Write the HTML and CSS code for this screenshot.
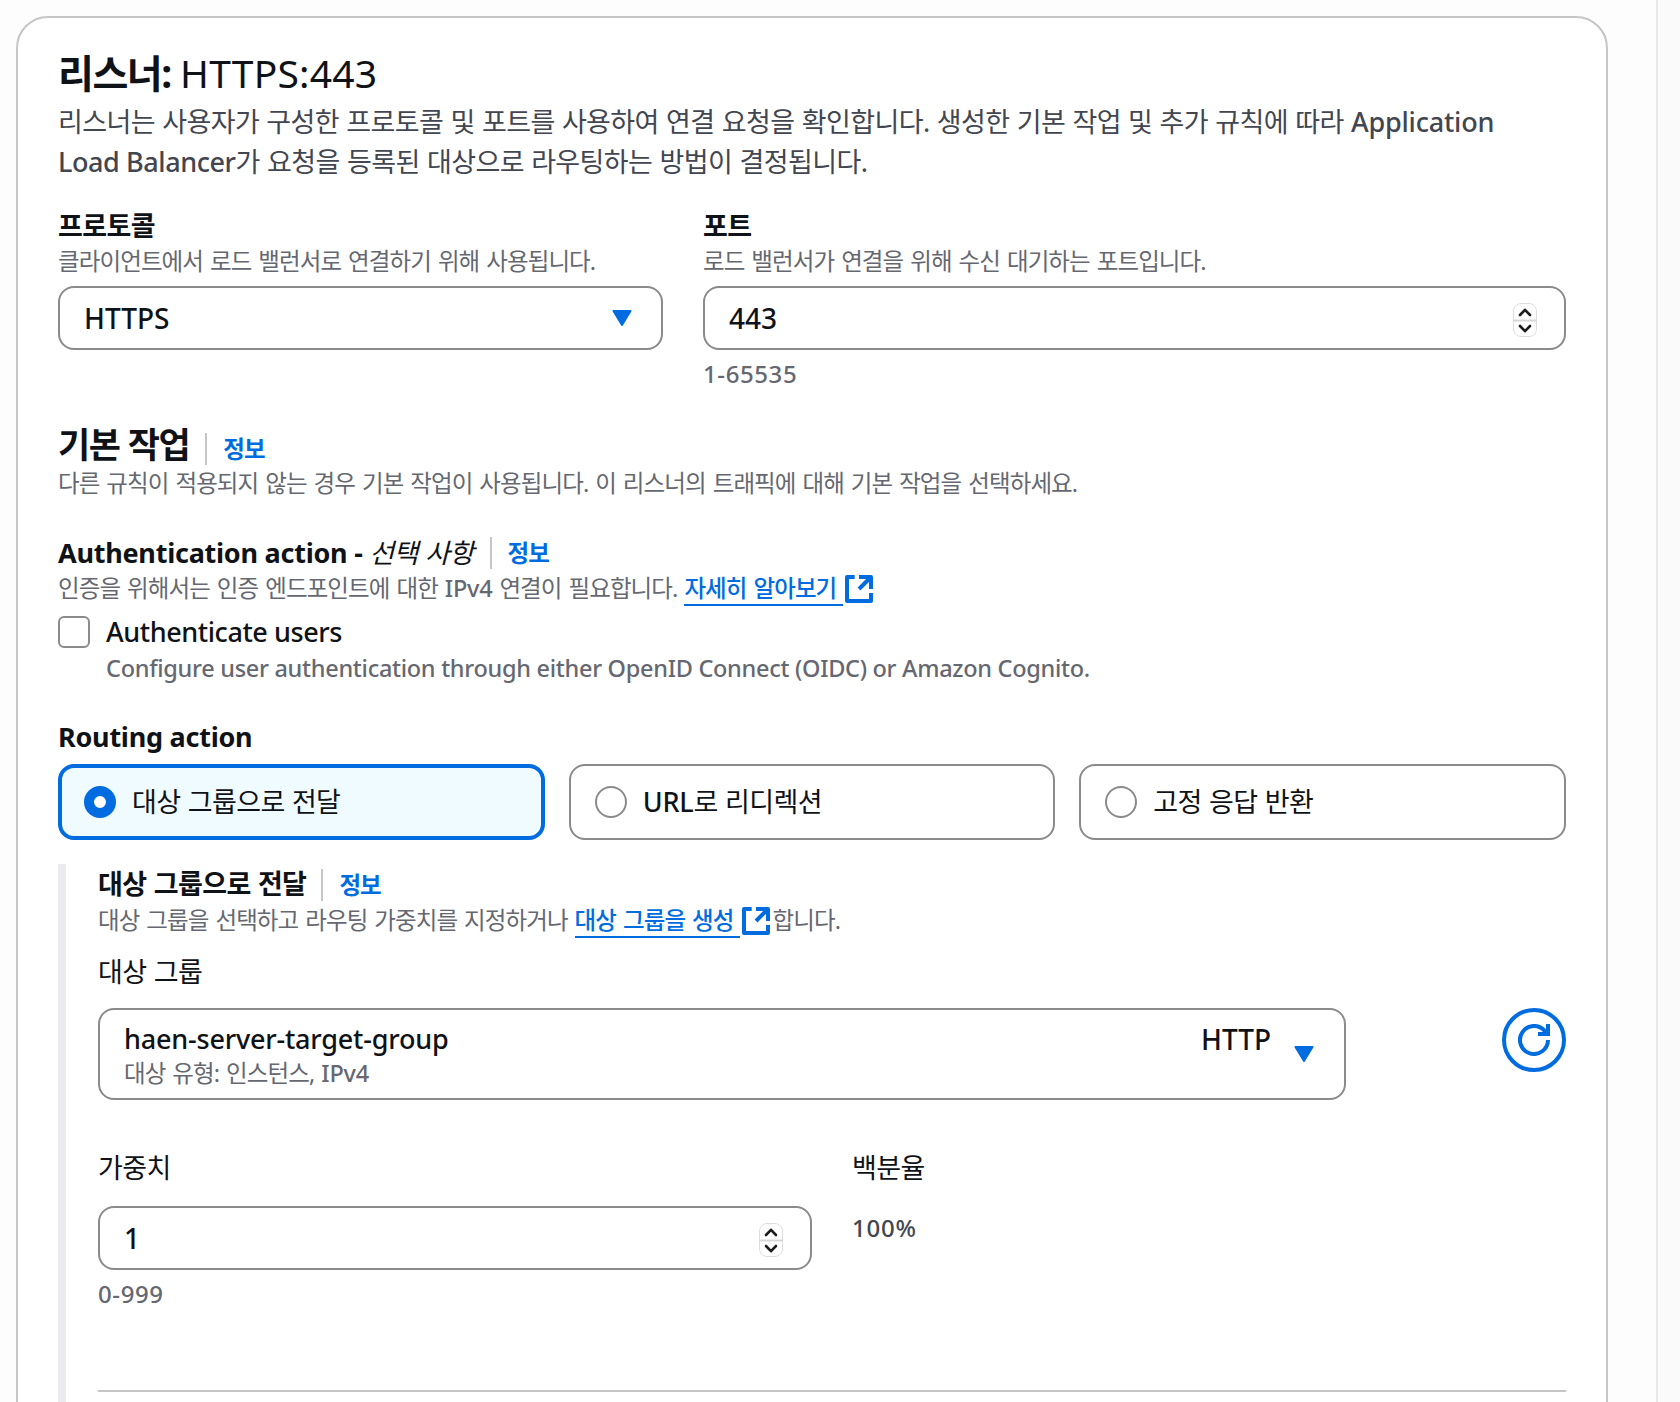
FILE: index.html
```html
<!DOCTYPE html>
<html lang="ko">
<head>
  <meta charset="UTF-8" />
  <meta name="viewport" content="width=device-width, initial-scale=1" />
  <title>리스너: HTTPS:443</title>
  <link rel="stylesheet" href="styles.css">
</head>
<body>
  <main class="page">
    <section class="card">
      <h2 class="card-title">리스너: <span class="card-title-value">HTTPS:443</span></h2>
      <p class="card-description">리스너는 사용자가 구성한 프로토콜 및 포트를 사용하여 연결 요청을 확인합니다. 생성한 기본 작업 및 추가 규칙에 따라 <span class="latin">Application</span><br><span class="latin product">Load Balancer</span>가 요청을 등록된 대상으로 라우팅하는 방법이 결정됩니다.</p>

      <div class="listener-fields">
        <div class="field">
          <div class="label">프로토콜</div>
          <div class="hint">클라이언트에서 로드 밸런서로 연결하기 위해 사용됩니다.</div>
          <div class="control" role="button" tabindex="0">
            <span class="value">HTTPS</span>
            <svg class="caret" viewBox="0 0 20 16"><path d="M1.5 1h17L10 15z" /></svg>
          </div>
        </div>
        <div class="field">
          <div class="label">포트</div>
          <div class="hint">로드 밸런서가 연결을 위해 수신 대기하는 포트입니다.</div>
          <div class="control">
            <span class="value">443</span>
            <svg class="stepper" viewBox="0 0 24 34"><rect x="0.5" y="0.5" width="23" height="33" rx="7.5" /><path class="stepper-line" d="M0 17.5h24" /><path d="M7 12l5-5.2 5 5.2M7 23l5 5.2 5-5.2" /></svg>
          </div>
          <div class="hint constraint">1-65535</div>
        </div>
      </div>

      <!-- Default action -->
      <div class="section-header default-action">
        <h3 class="section-title">기본 작업</h3>
        <a class="info">정보</a>
      </div>
      <div class="hint">다른 규칙이 적용되지 않는 경우 기본 작업이 사용됩니다. 이 리스너의 트래픽에 대해 기본 작업을 선택하세요.</div>

      <!-- Authentication -->
      <div class="section-header authentication">
        <div class="label"><span class="latin-bold">Authentication action - </span><i class="optional">선택 사항</i></div>
        <a class="info">정보</a>
      </div>
      <div class="hint">인증을 위해서는 인증 엔드포인트에 대한 <span class="latin">IPv4</span> 연결이 필요합니다. <a class="link">자세히 알아보기</a><svg class="external" viewBox="0 0 28 28"><path d="M9.7 2H2v24h24v-8M14 2h12v12M25 3L14 14" /></svg></div>
      <div class="checkbox-row">
        <span class="checkbox"></span>
        <div>
          <div class="checkbox-label">Authenticate users</div>
          <div class="hint checkbox-hint">Configure user authentication through either OpenID Connect (OIDC) or Amazon Cognito.</div>
        </div>
      </div>

      <!-- Routing action -->
      <div class="label routing-label"><span class="latin-bold">Routing action</span></div>
      <div class="tiles">
        <div class="tile selected"><span class="radio"></span>대상 그룹으로 전달</div>
        <div class="tile"><span class="radio"></span><span><span class="latin">URL</span>로 리디렉션</span></div>
        <div class="tile"><span class="radio"></span>고정 응답 반환</div>
      </div>

      <div class="forward">
        <div class="section-header">
          <div class="label">대상 그룹으로 전달</div>
          <a class="info">정보</a>
        </div>
        <div class="hint">대상 그룹을 선택하고 라우팅 가중치를 지정하거나 <a class="link">대상 그룹을 생성</a><svg class="external" viewBox="0 0 28 28"><path d="M9.7 2H2v24h24v-8M14 2h12v12M25 3L14 14" /></svg>합니다.</div>

        <div class="field-name group-name">대상 그룹</div>
        <div class="group-row">
          <div class="control group-select">
            <div class="group-text">
              <div class="group-value latin">haen-server-target-group</div>
              <div class="hint">대상 유형: 인스턴스, <span class="latin">IPv4</span></div>
            </div>
            <span class="group-protocol value">HTTP</span>
            <svg class="caret" viewBox="0 0 20 16"><path d="M1.5 1h17L10 15z" /></svg>
          </div>
          <button class="refresh" aria-label="refresh">
            <svg viewBox="0 0 32 32"><path d="M30 16a14 14 0 1 1-3-8.7L29 10M30 0v10H20" /></svg>
          </button>
        </div>

        <div class="weight-row">
          <div class="weight">
            <div class="field-name">가중치</div>
            <div class="control">
              <span class="value">1</span>
              <svg class="stepper" viewBox="0 0 24 34"><rect x="0.5" y="0.5" width="23" height="33" rx="7.5" /><path class="stepper-line" d="M0 17.5h24" /><path d="M7 12l5-5.2 5 5.2M7 23l5 5.2 5-5.2" /></svg>
            </div>
            <div class="hint constraint">0-999</div>
          </div>
          <div class="percent">
            <div class="field-name">백분율</div>
            <div class="percent-value">100%</div>
          </div>
        </div>
        <hr class="divider">
      </div>
    </section>
  </main>
  <aside class="side"></aside>
</body>
</html>
```
FILE: styles.css
```css
* {
  box-sizing: border-box;
}

body {
  margin: 0;
  height: 1402px;
  overflow: hidden;
  display: flex;
  background: #fdfdfd;
  color: #0f1216;
  font-family: "Noto Sans", "Noto Sans CJK KR", sans-serif;
  font-size: 27px;
  line-height: 40px;
  letter-spacing: -0.6px;
  word-spacing: 0.8px;
  white-space: nowrap;
}

h2, h3, p {
  margin: 0;
}

.page {
  width: 1656px;
  flex-shrink: 0;
  padding: 16px 48px 0 16px;
}

.side {
  flex: 1;
  border-left: 2px solid #e9e9e9;
  background: #fafafa;
}

.card {
  height: 1440px;
  padding: 32px 40px 0;
  border: 2px solid #c6c6c8;
  border-radius: 32px;
  background: #fff;
}

/* Latin runs are a bit heavier than the hangul around them */
.latin {
  font-weight: 500;
  letter-spacing: -0.2px;
  word-spacing: 0;
}

.latin-bold {
  letter-spacing: -0.25px;
  word-spacing: 0;
}

.product {
  letter-spacing: -0.42px;
}

.value {
  font-size: 28px;
  font-weight: 500;
  letter-spacing: 0;
}

.card-title {
  margin-top: -1px;
  font-size: 39px;
  line-height: 48px;
  font-weight: 700;
  letter-spacing: -1.5px;
}

.card-title-value {
  font-weight: 400;
  letter-spacing: 0.2px;
}

.card-description {
  margin-top: 5px;
  color: #424650;
}

/* Form fields */
.listener-fields {
  display: grid;
  grid-template-columns: 605px 1fr;
  column-gap: 40px;
  margin-top: 24px;
}

.label {
  font-weight: 700;
}

.field .label {
  height: 39px;
}

.hint {
  font-size: 23.5px;
  line-height: 32px;
  letter-spacing: -0.9px;
  word-spacing: 1.7px;
  color: #656870;
}

.control {
  display: flex;
  align-items: center;
  justify-content: space-between;
  height: 64px;
  margin-top: 9px;
  padding: 0 28px 0 24px;
  border: 2px solid #8b8b8e;
  border-radius: 16px;
}

.caret {
  width: 22px;
  height: 16px;
  fill: #006ce0;
  stroke: #006ce0;
  stroke-width: 2;
  stroke-linejoin: round;
}

.stepper {
  width: 24px;
  height: 34px;
  margin: 3px -1px 0 0;
  fill: none;
  stroke: #1b1b1b;
  stroke-width: 2.6;
  stroke-linecap: round;
  stroke-linejoin: round;
}

.stepper rect {
  stroke: #dedede;
  stroke-width: 1;
}

.stepper .stepper-line {
  stroke: #d6d6d6;
  stroke-width: 2;
  stroke-linecap: butt;
}

.constraint {
  margin-top: 8px;
  font-size: 24px;
  font-weight: 500;
  letter-spacing: 0.6px;
}

/* Section headers */
.section-header {
  display: flex;
  align-items: center;
}

.default-action {
  margin-top: 33px;
}

.section-title {
  font-size: 35px;
  line-height: 44px;
  letter-spacing: -1.5px;
}

.info {
  margin-left: 16px;
  padding-left: 16px;
  border-left: 2px solid #c6c6c8;
  font-size: 23.5px;
  line-height: 32px;
  font-weight: 700;
  letter-spacing: -0.9px;
  color: #006ce0;
}

.default-action .info {
  margin-top: 8px;
}

.authentication {
  height: 39px;
  margin-top: 34px;
}

.optional {
  font-weight: 400;
}

.link {
  padding-right: 7px;
  border-bottom: 2px solid #006ce0;
  color: #006ce0;
  font-weight: 500;
}

.external {
  width: 28px;
  height: 28px;
  margin: 0 2px;
  vertical-align: -6px;
  fill: none;
  stroke: #006ce0;
  stroke-width: 4;
  stroke-linejoin: round;
}

/* Checkbox */
.checkbox-row {
  display: flex;
  gap: 16px;
  margin-top: 8px;
}

.checkbox {
  width: 32px;
  height: 32px;
  margin-top: 4px;
  border: 2px solid #8b8b8e;
  border-radius: 6px;
}

.checkbox-label {
  font-weight: 500;
  letter-spacing: -0.42px;
  word-spacing: 0;
}

.checkbox-hint {
  font-weight: 500;
  letter-spacing: -0.29px;
  word-spacing: 0;
}

/* Routing tiles */
.routing-label {
  margin-top: 33px;
}

.tiles {
  display: grid;
  grid-template-columns: repeat(3, 1fr);
  gap: 24px;
  margin-top: 7px;
}

.tile {
  display: flex;
  align-items: center;
  gap: 16px;
  height: 76px;
  padding: 0 24px;
  border: 2px solid #8b8b8e;
  border-radius: 16px;
}

.radio {
  width: 32px;
  height: 32px;
  border: 2px solid #8b8b8e;
  border-radius: 50%;
  background: #fff;
}

.tile.selected {
  padding: 0 22px;
  border: 4px solid #006ce0;
  background: #f0fbff;
}

.selected .radio {
  border: 10px solid #006ce0;
}

/* Forward to target groups */
.forward {
  height: 560px;
  margin-top: 24px;
  padding-left: 32px;
  border-left: 8px solid #ebebed;
}

.forward .info {
  margin: 1px 0 0 15px;
}

.group-name {
  margin-top: 16px;
}

.group-row {
  display: flex;
  justify-content: space-between;
  margin-top: 16px;
}

.group-select {
  width: 1248px;
  height: 92px;
  margin-top: 0;
  padding-right: 29px;
}

.group-text {
  flex: 1;
}

.group-value {
  line-height: 37px;
}

.group-protocol {
  margin: -30px 22px 0 0;
}

.refresh {
  width: 64px;
  height: 64px;
  padding: 12px;
  border: 4px solid #006ce0;
  border-radius: 50%;
  background: #fff;
}

.refresh svg {
  display: block;
  width: 32px;
  height: 32px;
  fill: none;
  stroke: #006ce0;
  stroke-width: 4;
}

.weight-row {
  display: flex;
  gap: 40px;
  margin-top: 48px;
}

.weight {
  width: 714px;
}

.weight .control {
  margin-top: 18px;
}

.percent-value {
  margin-top: 20px;
  font-size: 24px;
  font-weight: 500;
  letter-spacing: 0.8px;
  color: #424650;
}

.divider {
  height: 2px;
  margin: 80px 0 0;
  border: 0;
  background: #c6c6c8;
}
```
